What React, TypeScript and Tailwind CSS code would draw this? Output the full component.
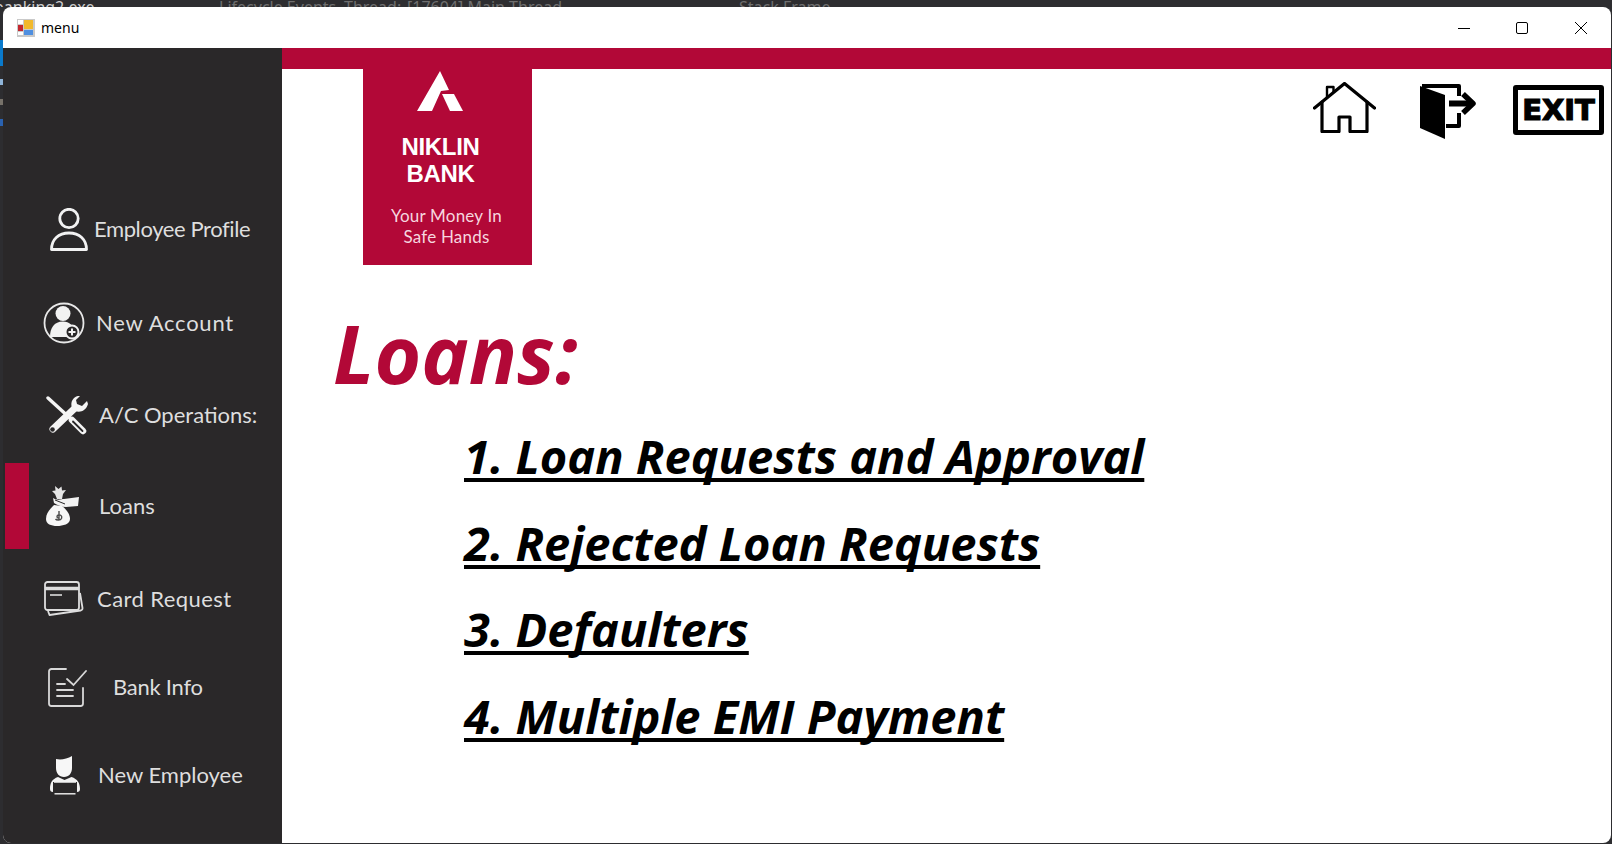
import type { ReactNode } from 'react'

const PersonIcon = () => (
  <svg width="38" height="43" viewBox="0 0 38 43" fill="none" stroke="#f2f2f2" strokeWidth="2.800">
    <circle cx="19" cy="10.500" r="9.200" />
    <path d="M1.500 41.500c0-10 7-16.500 17.500-16.500s17.500 6.500 17.500 16.500z" strokeLinejoin="round" />
  </svg>
)

const AccountIcon = () => (
  <svg width="42" height="42" viewBox="0 0 42 42">
    <circle cx="21" cy="21" r="19.500" fill="none" stroke="#e8e8e8" strokeWidth="1.800" />
    <circle cx="20" cy="11.500" r="7.500" fill="#f2f2f2" />
    <path d="M7 35c0-9 4-15.500 13-15.500 3 0 6 1 8 3v12.500z" fill="#f2f2f2" />
    <circle cx="29" cy="30" r="6.500" fill="#2a2829" stroke="#f2f2f2" strokeWidth="2" />
    <path d="M29 26.500v7M25.500 30h7" stroke="#f2f2f2" strokeWidth="2" />
  </svg>
)

const ToolsIcon = () => (
  <svg width="43" height="41" viewBox="0 0 43 41" fill="none">
    <path d="M2 3l23 21" stroke="#f5f5f5" strokeWidth="3.400" strokeLinecap="round" />
    <path d="M26 25l11 11" stroke="#f5f5f5" strokeWidth="6.500" strokeLinecap="round" />
    <path d="M27 26.500l9.500 9.500" stroke="#2a2829" strokeWidth="1.800" strokeLinecap="round" />
    <path d="M28 14L7 34" stroke="#f5f5f5" strokeWidth="7" strokeLinecap="round" />
    <circle cx="6.500" cy="34.500" r="2.300" fill="#2a2829" />
    <path d="M32 1c-5 1-8 6-6 12l3 3c5 2 11 0 13-7l-1-3-5 5-5-2-1-4 4-4z" fill="#f5f5f5" />
  </svg>
)

const MoneyBagIcon = () => (
  <svg width="33" height="40" viewBox="0 0 33 40" fill="none">
    <path d="M9 0l3.500 3 3-2.500 .5 4 4-.5-3 4-1 5h-5l-2-5-3-3 3.500-.5z" fill="#e6e6e6" />
    <path d="M7 12c4 3 9 1 11 1l15-2-1 9-12 1c-4 0-9-2-12-4z" fill="#f2f2f2" />
    <path d="M9 14l10 4" stroke="#2a2829" strokeWidth="1" />
    <path d="M8 19c-4 4-8 8-8 14 0 5 5 7 11 7s13-2 13-7c0-5-4-10-8-13z" fill="#f7f7f7" />
    <path d="M13 25v9M9.500 33c1 1.500 5 1.500 6-.5 1-2.500-1-4-3-3.500s-2 3 0 3" stroke="#4a4a4a" strokeWidth="1.400" />
  </svg>
)

const CardIcon = () => (
  <svg width="40" height="36" viewBox="0 0 40 36" fill="none" stroke="#dddddd" strokeWidth="1.800">
    <path d="M4 30l1.500 4 31-4.500c1.500-.3 2.200-1.200 2-2.500l-2.500-15" strokeLinejoin="round" />
    <rect x="1" y="1" width="34" height="28" rx="2.500" />
    <path d="M1 7.500h34" strokeWidth="3.500" />
    <path d="M6 14h12" strokeWidth="1.600" />
  </svg>
)

const BankInfoIcon = () => (
  <svg width="39" height="39" viewBox="0 0 39 39" fill="none" stroke="#d8d8d8" strokeWidth="1.800" strokeLinecap="round">
    <path d="M18 1H3.500C2 1 1 2 1 3.500v32C1 37 2 38 3.500 38h29c1.500 0 2.500-1 2.500-2.500V20" />
    <path d="M19 11l6.500 6L38 3" />
    <path d="M9 16h8M9 22h16M9 28h16" />
  </svg>
)

const EmployeeIcon = () => (
  <svg width="30" height="39" viewBox="0 0 30 39">
    <path d="M6 3c5 1 11 0 16-3v12c0 5-3 9-8 9S6 17 6 12z" fill="#f7f7f7" />
    <path d="M0 33c0-6 2-10 8-12l6.500 3 7-3c6 2 8.500 6 8.500 12 0 2-1 3-3 3V26H3v10c-2 0-3-1-3-3z" fill="#f2f2f2" />
    <path d="M4 26h22" stroke="#f2f2f2" strokeWidth="1.500" />
    <path d="M4.500 37.800h21" stroke="#f2f2f2" strokeWidth="1.400" />
  </svg>
)

const HomeIcon = () => (
  <svg width="63" height="51" viewBox="0 0 63 51" fill="none" stroke="#000" strokeWidth="3.200" strokeLinecap="round" strokeLinejoin="round">
    <path d="M1.500 26L31.500 1.500 61.500 26" />
    <path d="M14 15V5h6.500v5" strokeWidth="2.400" />
    <path d="M9 20v29.500h17V35h11v14.500h17V20" />
  </svg>
)

const DoorIcon = () => (
  <svg width="57" height="55" viewBox="0 0 57 55">
    <path d="M0 2l25 9v44L0 44z" fill="#000" />
    <path d="M2 2h37v10M39 29v13H26" fill="none" stroke="#000" strokeWidth="4" strokeLinejoin="round" />
    <path d="M29 19.500h20" stroke="#000" strokeWidth="6" />
    <path d="M43 10l10 9.500-10 9.500" fill="none" stroke="#000" strokeWidth="5.500" strokeLinejoin="round" />
  </svg>
)

const WindowsFormIcon = () => (
  <div className="flex h-[18px] w-[18px] items-start gap-[1px] bg-[#c9c9c9] p-[1px]">
    <div className="flex w-[5px] flex-col gap-[1px]">
      <div className="h-[4px] bg-white" />
      <div className="h-[6px] bg-[#c4262e]" />
      <div className="h-[3px] bg-white" />
    </div>
    <div className="flex w-[9px] flex-col gap-[1px]">
      <div className="h-[9px] bg-[#f2b92c]" />
      <div className="h-[5px] bg-[#4f8fe0]" />
    </div>
  </div>
)

type NavItem = { label: string; icon: ReactNode; rowClass: string; textClass: string; active?: boolean }

const navItems: NavItem[] = [
  { label: 'Employee Profile', icon: <PersonIcon />, rowClass: 'h-[94px] pl-[47px]', textClass: 'ml-[6px] tracking-[-0.4px]' },
  { label: 'New Account', icon: <AccountIcon />, rowClass: 'h-[94px] pl-[40px]', textClass: 'ml-[11px] tracking-[0.75px]' },
  { label: 'A/C Operations:', icon: <ToolsIcon />, rowClass: 'h-[90px] pl-[43px]', textClass: 'ml-[10px]' },
  { label: 'Loans', icon: <MoneyBagIcon />, rowClass: 'mt-[3px] h-[86px] pl-[43px]', textClass: 'ml-[20px]', active: true },
  { label: 'Card Request', icon: <CardIcon />, rowClass: 'mt-[3px] h-[94px] pl-[41px]', textClass: 'ml-[13px] tracking-[0.43px]' },
  { label: 'Bank Info', icon: <BankInfoIcon />, rowClass: 'h-[82px] pl-[45px]', textClass: 'ml-[26px] tracking-[-0.25px]' },
  { label: 'New Employee', icon: <EmployeeIcon />, rowClass: 'h-[94px] pl-[47px]', textClass: 'ml-[18px]' },
]

const links = ['1. Loan Requests and Approval', '2. Rejected Loan Requests', '3. Defaulters', '4. Multiple EMI Payment']

export default function App() {
  return (
    <div className="flex h-[844px] w-[1612px] flex-col overflow-hidden bg-[#2d2d30] font-['Lato',sans-serif]">
      {/* what shows of the IDE behind the window */}
      <div className="flex h-[7px] overflow-hidden whitespace-nowrap font-['Noto_Sans',sans-serif] text-[16px] leading-[14px]">
        <span className="-ml-[6px] w-[225px] text-[#cfcfcf]">banking2.exe</span>
        <span className="w-[125px] text-[#6f6f6f]">Lifecycle Events</span>
        <span className="w-[63px] text-[#6f6f6f]">Thread:</span>
        <span className="w-[332px] text-[#6f6f6f]">[17604] Main Thread</span>
        <span className="text-[#6f6f6f]">Stack Frame</span>
      </div>

      <div className="flex min-h-0 flex-1">
        <div className="flex w-[3px] flex-col pt-[33px]">
          <div className="h-[26px] bg-[#0a7acc]" />
          <div className="mt-[13px] h-[6px] bg-[#8fb4d8]" />
          <div className="mt-[14px] h-[6px] bg-[#77726a]" />
          <div className="mt-[14px] h-[7px] bg-[#2a62b0]" />
        </div>

        <div className="mb-[1px] mr-[1px] flex min-w-0 flex-1 flex-col overflow-hidden rounded-b-lg rounded-t-lg bg-white">
          <div className="flex h-[41px] shrink-0 items-center pl-[14px]">
            <WindowsFormIcon />
            <span className="ml-[6px] font-['Noto_Sans',sans-serif] text-[14px] text-black">menu</span>
            <div className="ml-auto flex items-center pr-[24px]">
              <svg width="12" height="12" viewBox="0 0 12 12" stroke="#000" fill="none">
                <path d="M0 6.500h12" />
              </svg>
              <svg className="ml-[46px]" width="12" height="12" viewBox="0 0 12 12" stroke="#000" fill="none">
                <rect x="0.500" y="0.500" width="11" height="11" rx="1.500" />
              </svg>
              <svg className="ml-[47px]" width="12" height="12" viewBox="0 0 12 12" stroke="#000" fill="none">
                <path d="M0 0l12 12M12 0L0 12" />
              </svg>
            </div>
          </div>

          <div className="flex min-h-0 flex-1">
            <aside className="w-[279px] shrink-0 bg-[#2a2829] pt-[134px] pr-[1px]">
              {navItems.map((item) => (
                <div key={item.label} className={`relative flex items-center ${item.rowClass}`}>
                  {item.active && <div className="absolute bottom-0 left-[2px] top-0 w-[24px] bg-[#b20837]" />}
                  {item.icon}
                  <span className={`text-[22px] leading-none text-[#dedede] ${item.textClass}`}>{item.label}</span>
                </div>
              ))}
            </aside>

            <main className="min-w-0 flex-1">
              <div className="h-[21px] bg-[#b20837]" />
              <div className="flex items-start">
                <div className="ml-[81px] flex h-[196px] w-[169px] flex-col items-center bg-[#b20837] text-white">
                  <svg className="mr-[16px] mt-[2px]" width="46" height="40" viewBox="0 0 46 40" fill="#fff">
                    <path d="M23 0l9 19-8 1-9 20H0z" />
                    <path d="M25 23h12l9 17H33z" />
                  </svg>
                  <div className="mt-[22px] -ml-[14px] text-center font-['Liberation_Sans',sans-serif] text-[24px] font-bold leading-[27px] tracking-[-0.3px]">
                    NIKLIN
                    <br />
                    BANK
                  </div>
                  <div className="mt-[18px] mr-[2px] text-center text-[17px] leading-[21px] tracking-[0.2px] text-[#f6d6df]">
                    Your Money In
                    <br />
                    Safe Hands
                  </div>
                </div>
                <div className="ml-auto mr-[7px] flex items-start pt-[13px]">
                  <HomeIcon />
                  <div className="ml-[44px] mt-[2px]">
                    <DoorIcon />
                  </div>
                  <div className="ml-[36px] mt-[3px] flex h-[50px] w-[91px] items-center justify-center rounded-[3px] border-[5px] border-black font-['DejaVu_Sans',sans-serif] text-[29px] font-bold leading-none text-black [-webkit-text-stroke:1.2px_black]">
                    EXIT
                  </div>
                </div>
              </div>

              <div className="font-['Open_Sans',sans-serif]">
                <h1 className="ml-[51px] mt-[40px] text-[80px] font-bold italic leading-[96px] text-[#b20837]">Loans:</h1>
                <div className="ml-[182px] mt-[27px] flex flex-col gap-[30px]">
                  {links.map((link) => (
                    <div key={link} className="h-[56.500px] whitespace-nowrap text-[47px] font-bold italic leading-[56.500px] text-black underline decoration-[4px] underline-offset-[4px] [text-decoration-skip-ink:none]">
                      {link}
                    </div>
                  ))}
                </div>
              </div>
            </main>
          </div>
        </div>
      </div>
    </div>
  )
}
